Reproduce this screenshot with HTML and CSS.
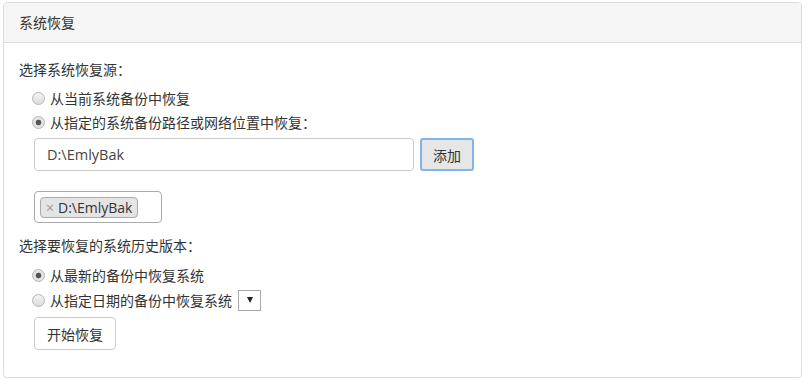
FILE: index.html
```html
<!DOCTYPE html>
<html lang="zh-CN">
<head>
<meta charset="UTF-8">
<meta name="viewport" content="width=device-width, initial-scale=1.0">
<title>系统恢复</title>
<link rel="stylesheet" href="styles.css">
</head>
<body>
<div class="panel">
  <div class="panel-heading">系统恢复</div>
  <div class="panel-body">
    <div class="section-label">选择系统恢复源：</div>
    <label class="radio-row first-src"><input type="radio" name="src"> 从当前系统备份中恢复</label>
    <label class="radio-row"><input type="radio" name="src" checked> 从指定的系统备份路径或网络位置中恢复：</label>
    <div class="path-row">
      <input class="path-input" type="text" value="D:\EmlyBak">
      <button class="btn btn-add">添加</button>
    </div>
    <div class="tag-box">
      <span class="tag"><span class="tag-x">×</span>D:\EmlyBak</span>
    </div>
    <div class="section-label">选择要恢复的系统历史版本：</div>
    <label class="radio-row first-ver"><input type="radio" name="ver" checked> 从最新的备份中恢复系统</label>
    <label class="radio-row"><input type="radio" name="ver"> 从指定日期的备份中恢复系统 <span class="date-select"><span class="caret"></span></span></label>
    <button class="btn btn-start">开始恢复</button>
  </div>
</div>
</body>
</html>
```

FILE: styles.css
```css
body, html {
    margin: 0;
    background: #ffffff;
    font-family: "Open Sans", "Noto Sans CJK SC", sans-serif;
    font-size: 14px;
    color: #333333;
}
.panel {
    margin: 2px 5px 0 3px;
    height: 374px;
    border: 1px solid #dddddd;
    border-radius: 4px;
    box-shadow: 0 1px 1px rgba(0,0,0,0.05);
}
.panel-heading {
    height: 39px;
    line-height: 39px;
    padding-left: 15px;
    background: #f5f5f5;
    border-bottom: 1px solid #dddddd;
    border-radius: 3px 3px 0 0;
}
.panel-body {
    padding: 16px 15px 15px 15px;
}
.section-label {
    line-height: 22px;
}
.radio-row {
    display: flex;
    align-items: center;
    height: 24px;
    padding-left: 13px;
    gap: 4px;
}
.first-src {
    margin-top: 5px;
}
.first-ver {
    margin-top: 6px;
    margin-bottom: 1px;
}
.radio-row input {
    appearance: none;
    -webkit-appearance: none;
    width: 13px;
    height: 13px;
    margin: 0 1px 0 0;
    border: 1px solid #b4b4b4;
    border-radius: 50%;
    background: linear-gradient(#f4f4f4, #dcdcdc);
    box-sizing: border-box;
}
.radio-row input:checked {
    background: radial-gradient(circle, #555555 0, #555555 2.5px, #e4e4e4 3.2px, #e4e4e4 100%);
}
.path-row {
    display: flex;
    gap: 6px;
    padding-left: 15px;
    margin-top: 4px;
}
.path-input {
    width: 380px;
    height: 33px;
    box-sizing: border-box;
    border: 1px solid #cccccc;
    border-radius: 4px;
    padding: 0 12px;
    font-family: "Open Sans", sans-serif;
    font-size: 14.5px;
    color: #444444;
}
.btn {
    font-family: "Noto Sans CJK SC", sans-serif;
    font-size: 14px;
    color: #333333;
    border-radius: 4px;
    box-sizing: border-box;
    height: 33px;
}
.btn-add {
    width: 54px;
    background: #e6e6e6;
    border: 2px solid #7fb5ea;
    border-radius: 3px;
}
.tag-box {
    margin: 20px 0 0 15px;
    width: 128px;
    height: 32px;
    box-sizing: border-box;
    border: 1px solid #aaaaaa;
    border-radius: 4px;
    padding: 5px;
}
.tag {
    display: inline-block;
    height: 21px;
    line-height: 19px;
    box-sizing: border-box;
    padding: 0 5px;
    background: #e4e4e4;
    border: 1px solid #aaaaaa;
    border-radius: 4px;
    font-size: 14px;
}
.tag-x {
    color: #999999;
    margin-right: 4px;
}
.tag-box + .section-label {
    margin-top: 12px;
}
.date-select {
    display: inline-flex;
    align-items: center;
    justify-content: center;
    width: 23px;
    height: 21px;
    box-sizing: border-box;
    border: 1px solid #a9a9a9;
    margin-left: 2px;
}
.caret {
    width: 0;
    height: 0;
    border-left: 3px solid transparent;
    border-right: 3px solid transparent;
    border-top: 6px solid #222222;
}
.btn-start {
    margin: 5px 0 0 15px;
    width: 82px;
    background: #ffffff;
    border: 1px solid #cccccc;
}
```
